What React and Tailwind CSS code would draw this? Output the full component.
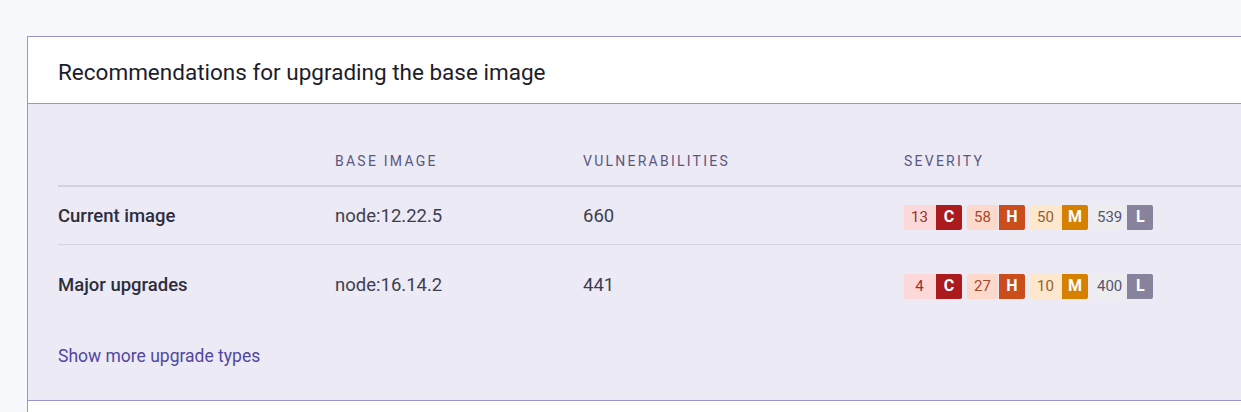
const rows = [
  { label: 'Current image', image: 'node:12.22.5', vulns: '660', sev: [13, 58, 50, 539] },
  { label: 'Major upgrades', image: 'node:16.14.2', vulns: '441', sev: [4, 27, 10, 400] },
]

const levels = [
  { key: 'C', soft: 'bg-[#fdd8d8] text-[#9b3030]', hard: 'bg-[#ab1a1d]' },
  { key: 'H', soft: 'bg-[#fdd9cb] text-[#a5482a]', hard: 'bg-[#ca4d1c]' },
  { key: 'M', soft: 'bg-[#fde7cd] text-[#946029]', hard: 'bg-[#d68000]' },
  { key: 'L', soft: 'bg-[#ededf0] text-[#555470]', hard: 'bg-[#87839c]' },
]

function Severity({ counts }) {
  return (
    <div className="flex items-center gap-[5px]">
      {levels.map((l, i) => (
        <div key={l.key} className="flex h-[25px] gap-px">
          <span className={`flex min-w-[31px] items-center justify-center rounded-l-[2px] px-[4px] text-[15px] ${l.soft}`}>
            {counts[i]}
          </span>
          <span className={`flex w-[26px] items-center justify-center rounded-r-[2px] text-[16px] font-bold text-white ${l.hard}`}>
            {l.key}
          </span>
        </div>
      ))}
    </div>
  )
}

export default function App() {
  return (
    <div className="h-[412px] overflow-hidden bg-[#f6f8fb] pt-9 pl-[27px]" style={{ fontFamily: 'Roboto, "Noto Sans", sans-serif' }}>
      <div className="w-[1300px] border border-[#9b94d2] bg-white">
        {/* Header */}
        <div className="flex h-[67px] items-center border-b border-[#9b94d2] px-[30px] pt-[5px]">
          <h2 className="text-[22.5px] text-[#1d1c2b]">Recommendations for upgrading the base image</h2>
        </div>

        {/* Body */}
        <div className="bg-[#eceaf5] pl-[30px] pt-[47px] pb-[31px]">
          <div className="grid grid-cols-[277px_248px_321px_1fr] border-b-2 border-[#d3d1dc] pb-[13px] text-[14px] tracking-[0.16em] text-[#5a5880]">
            <span />
            <span>BASE IMAGE</span>
            <span>VULNERABILITIES</span>
            <span>SEVERITY</span>
          </div>
          {rows.map((r, i) => (
            <div
              key={r.label}
              className={`grid grid-cols-[277px_248px_321px_1fr] items-center ${i === 0 ? 'h-[58px] border-b border-[#d5d3de] pt-[3px]' : 'h-[78px] pt-[4px]'}`}
            >
              <span className="text-[18.5px] font-medium text-[#2e2d3d]">{r.label}</span>
              <span className="text-[18.5px] text-[#3f3e4e]">{r.image}</span>
              <span className="text-[18.5px] text-[#3f3e4e]">{r.vulns}</span>
              <Severity counts={r.sev} />
            </div>
          ))}
          <div className="pt-[20px]">
            <a className="text-[17.5px] text-[#5247a0]">Show more upgrade types</a>
          </div>
        </div>
        <div className="h-8 border-t border-[#9b94d2] bg-white" />
      </div>
    </div>
  )
}
